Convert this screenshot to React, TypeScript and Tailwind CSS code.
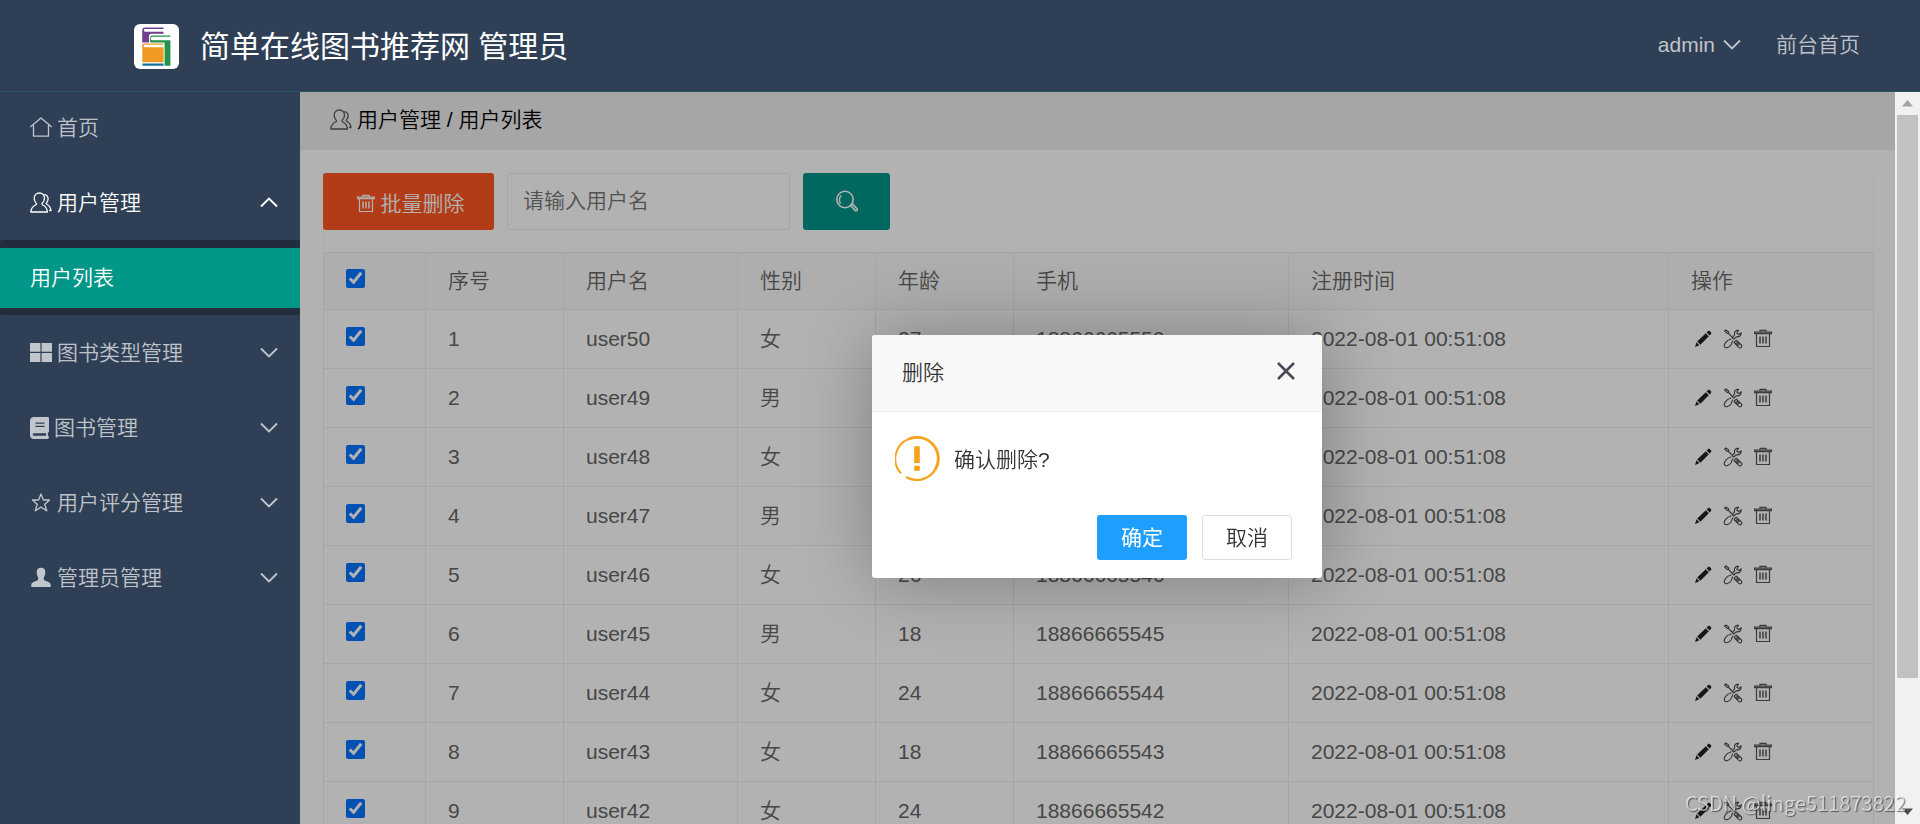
import { useState, type ReactNode } from "react";

type User = { id: number; name: string; gender: string; age: number; phone: string; time: string };

const USERS: User[] = [
  { id: 1, name: "user50", gender: "女", age: 27, phone: "18866665550", time: "2022-08-01 00:51:08" },
  { id: 2, name: "user49", gender: "男", age: 22, phone: "18866665549", time: "2022-08-01 00:51:08" },
  { id: 3, name: "user48", gender: "女", age: 25, phone: "18866665548", time: "2022-08-01 00:51:08" },
  { id: 4, name: "user47", gender: "男", age: 21, phone: "18866665547", time: "2022-08-01 00:51:08" },
  { id: 5, name: "user46", gender: "女", age: 26, phone: "18866665546", time: "2022-08-01 00:51:08" },
  { id: 6, name: "user45", gender: "男", age: 18, phone: "18866665545", time: "2022-08-01 00:51:08" },
  { id: 7, name: "user44", gender: "女", age: 24, phone: "18866665544", time: "2022-08-01 00:51:08" },
  { id: 8, name: "user43", gender: "女", age: 18, phone: "18866665543", time: "2022-08-01 00:51:08" },
  { id: 9, name: "user42", gender: "女", age: 24, phone: "18866665542", time: "2022-08-01 00:51:08" },
];

function Logo() {
  return (
    <svg viewBox="0 0 45 45" className="size-[45px] shrink-0" aria-hidden="true">
      <rect width="45" height="45" rx="6" fill="#fff" />
      <path d="M10.500 3.500H29.500V4.900H11.200a1.400 1.400 0 0 0 0 2.800H29.500V9.800H17.500a2.500 2.500 0 0 0-2.500 2.500V18.500H8.200V6a2.500 2.500 0 0 1 2.300-2.500z" fill="#6f3f8c" />
      <path d="M18 11.600H36.400V12.700H18.500a1.700 1.700 0 0 0 0 3.500H36.400V41.700H30.600V18.500H16.200V13.500a1.900 1.900 0 0 1 1.800-1.900z" fill="#23924a" />
      <path d="M10 19.500H29.600V20.800H11a1.200 1.200 0 0 0 0 2.400H29.600V38.300H8.300V21.300A1.800 1.800 0 0 1 10 19.500z" fill="#f09a22" />
      <path d="M8.500 39.500H29.600V41.800H10a1.500 1.500 0 0 1-1.500-2.300z" fill="#1b6f96" />
    </svg>
  );
}

const line = { fill: "none", stroke: "currentColor", strokeWidth: 1.3, strokeLinejoin: "round", strokeLinecap: "round" } as const;

function HomeIcon() {
  return (
    <svg viewBox="0 0 22 22" className="size-[22px] shrink-0" aria-hidden="true" {...line}>
      <path d="M.8 9.600 11 1l10.200 8.600M3.500 8.500v10.700h15V8.500" />
    </svg>
  );
}

function UsersIcon() {
  return (
    <svg viewBox="0 0 22 22" className="size-[22px] shrink-0" aria-hidden="true" {...line}>
      <path d="M9.500 1c3 0 5 2.200 5 5.200 0 2-.9 3.800-2.200 4.900-.7.700-.3 1.500.5 1.900 3 1.400 4.300 3.500 4.600 7H.8c.3-3.500 1.600-5.600 4.800-7 .9-.4 1.200-1.200.5-1.900C5 10 4.200 8.200 4.200 6.200c0-3 2.200-5.200 5.300-5.200z" />
      <path d="M14.800 2.700c2.200.6 3.300 2.200 3.300 4.300 0 1.500-.6 2.800-1.600 3.800-.5.500-.3 1.100.3 1.400 2.400 1.300 3.800 3.300 4.200 6.300h-1.500" />
    </svg>
  );
}

function GridIcon() {
  return (
    <svg viewBox="0 0 22 22" className="size-[22px] shrink-0" fill="currentColor" aria-hidden="true">
      <path d="M0 1h10.400v8.800H0zM11.600 1H22v8.800H11.600zM0 11.100h10.400V20H0zM11.600 11.100H22V20H11.600z" />
    </svg>
  );
}

function BookIcon() {
  return (
    <svg viewBox="0 0 19 22" className="h-[22px] w-[19px] shrink-0" fill="currentColor" aria-hidden="true">
      <path
        fillRule="evenodd"
        d="M4 0h13.500c1 0 1.500.5 1.500 1.400V14c0 .8-.3 1.300-.9 1.500-.5.900-.5 2.300 0 3.400.6.200.9.600.9 1.200 0 1-.6 1.900-1.600 1.900H4c-2.500 0-4-1.500-4-4V4c0-2.500 1.500-4 4-4zm1.500 5.600v1.100h9V5.600zm0 3.200v1.100h9V8.800zM4 16.200a1.200 1.200 0 0 0 0 2.600h12v-2.600z"
      />
    </svg>
  );
}

function StarIcon() {
  return (
    <svg viewBox="0 0 22 22" className="size-[22px] shrink-0" aria-hidden="true" {...line}>
      <path d="m11 2 2.400 6h6.100l-4.700 4.200 1.900 6.600L11 15.100l-5.700 3.700 1.900-6.600L2.500 8h6.100z" />
    </svg>
  );
}

function PersonIcon() {
  return (
    <svg viewBox="0 0 22 22" className="size-[22px] shrink-0" fill="currentColor" aria-hidden="true">
      <path d="M11 .7c3 0 4.500 1.900 4.300 4.700-.1 2-.5 3.700-1.500 5 0 1-.3 2.300 1 3 2.500 1.200 5.900 1.700 5.900 4.600v2H1.300v-2c0-2.900 3.400-3.400 5.900-4.600 1.300-.7 1-2 1-3-1-1.300-1.400-3-1.500-5-.2-2.800 1.300-4.700 4.300-4.700z" />
    </svg>
  );
}

function Chevron({ up = false }: { up?: boolean }) {
  return (
    <svg viewBox="0 0 18 18" className="size-[18px] shrink-0" fill="none" stroke="currentColor" strokeWidth="1.8" aria-hidden="true">
      <path d={up ? "m1 12.500 8-8 8 8" : "m1 4.500 8 8 8-8"} />
    </svg>
  );
}

function TrashIcon() {
  return (
    <svg viewBox="0 0 18 20" className="h-5 w-[18px] shrink-0" aria-hidden="true" fill="none" stroke="currentColor">
      <path d="M.6 4.600V3.200h16.800v1.400zM6 3V1.400h6V3M2.500 4.800V17.500h13V4.800" strokeWidth="1.200" />
      <path d="M6 7.500v7M9 7.500v7M12 7.500v7" strokeWidth="1.500" />
    </svg>
  );
}

function PencilIcon() {
  return (
    <svg viewBox="0 0 18 18" className="size-[18px]" fill="#222" aria-hidden="true">
      <path d="m1 17 1.500-4.700 2.900 3zM3.200 11.400l8.600-8.200 3 3-8.400 8.600zM12.600 2.400l1.500-1.300c.6-.5 1.200-.4 1.700 0l1.200 1.200c.5.500.5 1.100 0 1.600l-1.400 1.500z" />
    </svg>
  );
}

function ToolsIcon() {
  return (
    <svg viewBox="0 0 20 20" className="size-5" fill="none" stroke="#444" strokeWidth="1.100" strokeLinejoin="round" aria-hidden="true">
      <path d="m1.600 2.200 1.200-1.200 2.900 2-.1 1.300-1.400.1zM5.400 4.300 9 8" />
      <path d="M15.500 1.300c-2.600-.4-4.700 2-3.900 4.500L9.300 8.500l1.500 1.500 2.600-2.300c2.700.8 5-1.300 4.800-3.900l-2.500 1.800-1.900-1.600z" />
      <path d="M8.300 9.600 7 10.500c-2.400.4-5.300 3.200-5.800 5.600-.3 1.700 1 2.900 2.600 2.600 2.500-.6 4.900-3.200 5.300-5.700L10 11.500" />
      <path d="m11.700 12.600 1.600-1.400 5 4.700c1.500 1.600-.9 3.900-2.500 2.500l-4.700-4.700zM13.500 12.800l3 3M12.300 14l3 3" />
    </svg>
  );
}

function SearchIcon() {
  return (
    <svg viewBox="0 0 22 24" className="h-6 w-[22px]" fill="none" stroke="currentColor" strokeWidth="1.600" strokeLinejoin="round" aria-hidden="true">
      <circle cx="9" cy="9.500" r="8.200" />
      <path d="M4.500 13.500C3 11 3.200 7.500 5.200 5.500M14.500 15.500l1.700-1.600 5 5c.9 1-.8 2.700-1.800 1.700z" />
    </svg>
  );
}

function WarnIcon() {
  return (
    <svg viewBox="0 0 45 45" className="size-[45px] shrink-0" fill="none" stroke="#f8a11d" aria-hidden="true">
      <path d="M6 37.300A21.300 21.300 0 0 1 14 2.900" strokeWidth="2" />
      <path d="M13 3.300A21.300 21.300 0 0 1 40 34" strokeWidth="2.800" />
      <path d="M41 32A21.300 21.300 0 0 1 11 41" strokeWidth="2.200" />
      <path d="M19.200 10.300h5.600v16.700h-5.600zM19.200 29.800h5.600v5h-5.600z" fill="#f8a11d" stroke="none" />
    </svg>
  );
}

function NavItem({ icon, label, active = false, chevron }: { icon: ReactNode; label: string; active?: boolean; chevron?: "up" | "down" }) {
  return (
    <a href="#" className={`flex h-[75px] items-center gap-[5px] pr-[22px] pl-[30px] ${active ? "text-white" : "text-white/70"}`}>
      {icon}
      <span className="flex-1">{label}</span>
      {chevron && <Chevron up={chevron === "up"} />}
    </a>
  );
}

const cell = "border border-[#eee] px-[22px] text-left font-[350]";

function Check({ label, checked, onChange }: { label: string; checked: boolean; onChange: () => void }) {
  return <input type="checkbox" aria-label={label} checked={checked} onChange={onChange} className="mb-1.5 block size-[19px] accent-[#0075ff]" />;
}

export default function App() {
  const [picked, setPicked] = useState<number[]>(USERS.map((u) => u.id));
  const [open, setOpen] = useState(true);
  const all = picked.length === USERS.length;
  const toggle = (id: number) => setPicked((p) => (p.includes(id) ? p.filter((x) => x !== id) : [...p, id]));

  return (
    <div className="flex h-screen flex-col overflow-hidden bg-white font-['Liberation_Sans','Noto_Sans_CJK_SC',sans-serif] text-[21px] leading-8 font-[350] text-[#666]">
      <header className="relative z-10 -mb-0.5 flex h-[92px] shrink-0 items-center justify-between border-b border-[#29535f] bg-[#2f4056] pt-0.5 pr-[60px] pl-[134px]">
        <div className="flex items-center gap-[21px]">
          <Logo />
          <h1 className="text-[30px] leading-10 font-normal text-white">简单在线图书推荐网 管理员</h1>
        </div>
        <nav className="flex items-center gap-[35px] pb-1 text-white/70">
          <a href="#" className="flex items-center gap-2">
            admin <Chevron />
          </a>
          <a href="#">前台首页</a>
        </nav>
      </header>

      <div className="flex min-h-0 flex-1">
        <aside className="w-[300px] shrink-0 bg-[#2f4056]">
          <nav>
            <NavItem icon={<HomeIcon />} label="首页" />
            <NavItem icon={<UsersIcon />} label="用户管理" active chevron="up" />
            <div className="rounded-[3px] bg-[#212d3c] pt-2 pb-[7px]">
              <a href="#" className="flex h-[60px] items-center bg-[#009688] px-[30px] text-white">
                用户列表
              </a>
            </div>
            <NavItem icon={<GridIcon />} label="图书类型管理" chevron="down" />
            <NavItem icon={<BookIcon />} label="图书管理" chevron="down" />
            <NavItem icon={<StarIcon />} label="用户评分管理" chevron="down" />
            <NavItem icon={<PersonIcon />} label="管理员管理" chevron="down" />
          </nav>
        </aside>

        <main className="relative min-w-0 flex-1 overflow-hidden">
          <div className="flex h-[60px] items-center gap-[5px] bg-[#eee] px-[30px] text-black">
            <span className="text-[#555]">
              <UsersIcon />
            </span>
            <span>用户管理 / 用户列表</span>
          </div>
          <div className="py-[23px] pr-[21px] pl-[23px]">
            <div className="border-x border-[#f8f8f8]">
              <div className="-ml-px flex gap-[13px] pb-[22px]">
                <button type="button" onClick={() => setOpen(true)} className="flex h-[57px] w-[171px] items-center justify-center gap-1.5 rounded-[3px] bg-[#ff5722] pt-1 pl-1 text-white">
                  <TrashIcon />
                  批量删除
                </button>
                <input
                  type="text"
                  aria-label="用户名"
                  placeholder="请输入用户名"
                  className="h-[57px] w-[283px] rounded-[3px] border border-[#eee] px-[15px] pb-0.5 placeholder:text-[#757575]"
                />
                <button type="button" aria-label="搜索" className="flex h-[57px] w-[87px] items-center justify-center rounded-[3px] bg-[#009688] text-white">
                  <SearchIcon />
                </button>
              </div>
            </div>
            <table className="w-full table-fixed border-collapse">
              <colgroup>
                <col className="w-[102px]" />
                <col className="w-[138px]" />
                <col className="w-[174px]" />
                <col className="w-[138px]" />
                <col className="w-[138px]" />
                <col className="w-[275px]" />
                <col />
                <col className="w-[205px]" />
              </colgroup>
              <thead>
                <tr className="h-[57px] bg-[#fafafa]">
                  <th className={cell}>
                    <Check label="全选" checked={all} onChange={() => setPicked(all ? [] : USERS.map((u) => u.id))} />
                  </th>
                  {["序号", "用户名", "性别", "年龄", "手机", "注册时间", "操作"].map((h) => (
                    <th key={h} className={cell}>
                      {h}
                    </th>
                  ))}
                </tr>
              </thead>
              <tbody>
                {USERS.map((u) => (
                  <tr key={u.id} className="h-[59px]">
                    <td className={cell}>
                      <Check label={u.name} checked={picked.includes(u.id)} onChange={() => toggle(u.id)} />
                    </td>
                    <td className={cell}>{u.id}</td>
                    <td className={cell}>{u.name}</td>
                    <td className={cell}>{u.gender}</td>
                    <td className={cell}>{u.age}</td>
                    <td className={cell}>{u.phone}</td>
                    <td className={cell}>{u.time}</td>
                    <td className={cell}>
                      <div className="flex items-center gap-[11px] pl-[3px] text-[#555]">
                        <button type="button" aria-label="编辑">
                          <PencilIcon />
                        </button>
                        <button type="button" aria-label="设置">
                          <ToolsIcon />
                        </button>
                        <button type="button" aria-label="删除">
                          <TrashIcon />
                        </button>
                      </div>
                    </td>
                  </tr>
                ))}
              </tbody>
            </table>
          </div>
          {open && <div className="absolute inset-0 bg-black/30" />}
        </main>

        <div className="flex w-[25px] shrink-0 flex-col items-center justify-between bg-[#f1f1f1] pt-0.5" aria-hidden="true">
          <svg viewBox="0 0 25 23" className="h-[23px] w-[25px] shrink-0">
            <path d="M7 14.500h11l-5.500-6.500z" fill="#a3a3a3" />
          </svg>
          <div className="min-h-0 w-[21px] grow-[563] basis-0 bg-[#c1c1c1]" />
          <div className="grow-[123] basis-0" />
          <svg viewBox="0 0 25 23" className="h-[23px] w-[25px] shrink-0">
            <path d="M7 7.500h11L12.500 14z" fill="#505050" />
          </svg>
        </div>
      </div>

      {open && (
        <div className="pointer-events-none fixed inset-0 z-20 flex items-center justify-center pt-[89px] pl-[274px]">
          <section role="dialog" aria-label="删除" className="pointer-events-auto w-[450px] rounded-[3px] bg-white text-[#333] shadow-[2px_2px_75px_rgba(0,0,0,0.3)]">
            <div className="flex h-[77px] items-center justify-between rounded-t-[3px] border-b border-[#eee] bg-[#f8f8f8] pr-[27px] pl-[30px]">
              <h2>删除</h2>
              <button type="button" aria-label="关闭" onClick={() => setOpen(false)} className="pb-1">
                <svg viewBox="0 0 18 18" className="size-[18px]" fill="none" stroke="#4b4a57" strokeWidth="2.600" aria-hidden="true">
                  <path d="m1 1 16 16M17 1 1 17" />
                </svg>
              </button>
            </div>
            <div className="flex items-center gap-[14px] px-[23px] pt-6 pb-[34px]">
              <WarnIcon />
              <p className="pt-0.5">确认删除?</p>
            </div>
            <div className="flex justify-end gap-[15px] px-[30px] pb-[18px]">
              <button type="button" onClick={() => setOpen(false)} className="h-[45px] w-[90px] rounded-[3px] bg-[#1e9fff] font-normal text-white">
                确定
              </button>
              <button type="button" onClick={() => setOpen(false)} className="h-[45px] w-[90px] rounded-[3px] border border-[#dedede] bg-white">
                取消
              </button>
            </div>
          </section>
        </div>
      )}

      <div className="pointer-events-none fixed right-[14px] bottom-[5px] z-30 font-['Noto_Sans_CJK_SC',sans-serif] text-xl leading-8 font-normal text-white/60 [text-shadow:1px_1px_1px_rgba(0,0,0,0.5)]">
        CSDN @linge511873822
      </div>
    </div>
  );
}
